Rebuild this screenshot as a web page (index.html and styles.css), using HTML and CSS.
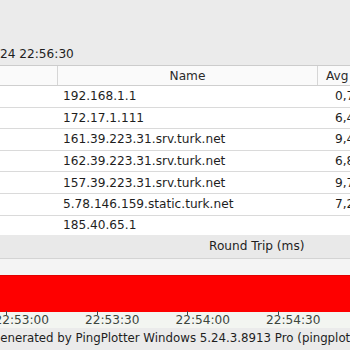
FILE: index.html
```html
<!DOCTYPE html>
<html>
<head>
<meta charset="utf-8">
<link rel="stylesheet" href="styles.css">
</head>
<body>
<div class="page">
  <div class="top"><span class="stamp">24 22:56:30</span></div>
  <div class="table">
    <div class="row head"><div class="c1"></div><div class="c2">Name</div><div class="c3">Avg</div></div>
    <div class="row"><div class="c1"></div><div class="c2">192.168.1.1</div><div class="c3 val">0,78</div></div>
    <div class="row"><div class="c1"></div><div class="c2">172.17.1.111</div><div class="c3 val">6,42</div></div>
    <div class="row"><div class="c1"></div><div class="c2">161.39.223.31.srv.turk.net</div><div class="c3 val">9,41</div></div>
    <div class="row"><div class="c1"></div><div class="c2">162.39.223.31.srv.turk.net</div><div class="c3 val">6,83</div></div>
    <div class="row"><div class="c1"></div><div class="c2">157.39.223.31.srv.turk.net</div><div class="c3 val">9,72</div></div>
    <div class="row"><div class="c1"></div><div class="c2">5.78.146.159.static.turk.net</div><div class="c3 val">7,25</div></div>
    <div class="row last"><div class="c1"></div><div class="c2">185.40.65.1</div><div class="c3 val"></div></div>
  </div>
  <div class="graph-title">Round Trip (ms)</div>
  <div class="graph-gap"></div>
  <div class="graph-bar"></div>
  <div class="axis">
    <span class="tick">22:53:00</span>
    <span class="tick">22:53:30</span>
    <span class="tick">22:54:00</span>
    <span class="tick">22:54:30</span>
  </div>
  <div class="footer"><span class="foot-text">Generated by PingPlotter Windows 5.24.3.8913 Pro (pingplotter.com)</span></div>
</div>
</body>
</html>
```
FILE: styles.css
```css
html, body {
  margin: 0;
  padding: 0;
  background: #ffffff;
}
body {
  font-family: "DejaVu Sans", Verdana, sans-serif;
  font-size: 12.15px;
  line-height: 14px;
  color: #1e1e1e;
}
.page {
  width: 350px;
  height: 350px;
  overflow: hidden;
  display: flex;
  flex-direction: column;
}
.top {
  height: 65px;
  flex: none;
  background: #ebebeb;
  display: flex;
  align-items: flex-end;
  padding-bottom: 4px;
  box-sizing: border-box;
  white-space: nowrap;
}
.stamp {
  margin-left: 0;
  color: #1e1e1e;
}
.table {
  flex: none;
  display: flex;
  flex-direction: column;
}
.row {
  display: grid;
  grid-template-columns: 58px 260px 200px;
  height: 21.6px;
  box-sizing: border-box;
  border-bottom: 1px solid #dadada;
  background: #ffffff;
  align-items: center;
  white-space: nowrap;
}
.row.head {
  height: 21px;
  border-top: 1px solid #cccccc;
  border-bottom: 1px solid #cfcfcf;
  background: #fafafa;
  align-items: stretch;
  color: #2a2a2a;
}
.row.last {
  height: 19.4px;
  border-bottom: none;
}
.head .c1 {
  border-right: 1px solid #d6d6d6;
}
.head .c2 {
  border-right: 1px solid #d6d6d6;
  text-align: center;
  display: flex;
  align-items: center;
  justify-content: center;
}
.head .c3 {
  display: flex;
  align-items: center;
  padding-left: 8px;
}
.c2 {
  padding-left: 5px;
  overflow: hidden;
}
.head .c2 {
  padding-left: 0;
}
.val {
  padding-left: 17px;
}
.graph-title {
  flex: none;
  height: 23px;
  background: #e9e9e9;
  display: flex;
  align-items: center;
  padding-left: 209px;
  color: #1e1e1e;
  white-space: nowrap;
}
.graph-gap {
  flex: none;
  height: 17px;
  box-sizing: border-box;
  border-top: 1px solid #d4d4d4;
  background: #f4f4f4;
}
.graph-bar {
  flex: none;
  height: 37px;
  background: #fe0000;
  border-top: 1px solid #e20000;
  box-sizing: border-box;
}
.axis {
  flex: none;
  height: 16px;
  background: #f3f5f1;
  display: flex;
  align-items: center;
  margin-left: -5.5px;
  white-space: nowrap;
  color: #3c463d;
}
.tick {
  flex: none;
  width: 90.5px;
  position: relative;
}
.tick::before {
  content: "";
  position: absolute;
  left: 11.5px;
  top: -2px;
  width: 1px;
  height: 4px;
  background: #4a4a4a;
}
.footer {
  flex: 1;
  background: #ebebeb;
  display: flex;
  align-items: center;
  white-space: nowrap;
  padding-bottom: 2px;
  box-sizing: border-box;
}
.foot-text {
  margin-left: -9px;
  font-size: 11.8px;
  color: #1e1e1e;
}
```
